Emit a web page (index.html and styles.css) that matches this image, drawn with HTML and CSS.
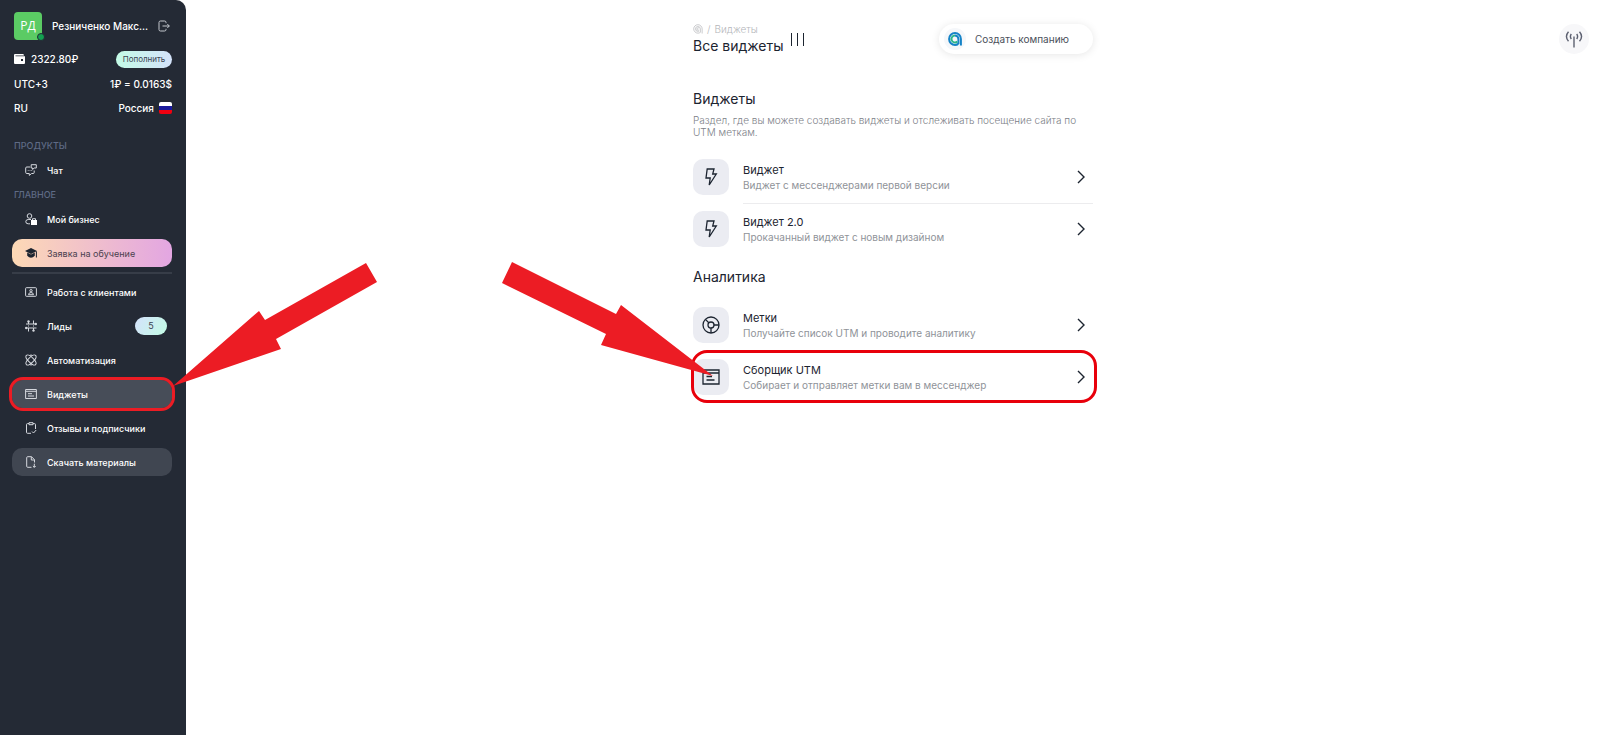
FILE: index.html
```html
<!DOCTYPE html>
<html lang="ru">
<head>
    <meta charset="UTF-8">
    <meta name="viewport" content="width=device-width, initial-scale=1.0">
    <title>Все виджеты</title>
    <link rel="stylesheet" href="styles.css">
</head>
<body>

<aside class="sidebar">
    <div class="user">
        <div class="avatar">РД<span class="status"></span></div>
        <div class="user-name">Резниченко Макс...</div>
        <button class="logout" aria-label="Выйти">
            <svg width="12" height="12" viewBox="0 0 12 12"><path d="M8 3.2V2.4Q8 1 6.500 1H2.500Q1 1 1 2.400V9.600Q1 11 2.500 11H6.500Q8 11 8 9.600V8.800M4.500 6H11.300M9.300 4L11.300 6L9.300 8"/></svg>
        </button>
    </div>

    <div class="info-row info-balance">
        <span class="balance">
            <svg class="wallet" width="11" height="10" viewBox="0 0 11 10"><path d="M0 1Q0 0 1 0H9Q10 0 10 1.500H1.500V2.200H11V9Q11 10 10 10H1Q0 10 0 9Z" fill="#fff"/><rect x="7" y="5" width="2" height="2" fill="#242a35"/></svg>
            2322.80₽
        </span>
        <button class="topup">Пополнить</button>
    </div>
    <div class="info-row"><span>UTC+3</span><span>1₽ = 0.0163$</span></div>
    <div class="info-row">
        <span>RU</span>
        <span class="country">Россия <i class="flag"></i></span>
    </div>

    <div class="menu-title">Продукты</div>
    <nav class="menu">
        <a class="menu-item" href="#">
            <svg class="icon" viewBox="0 0 12 12"><path d="M5.200 3H1.800Q.7 3 .7 4V8.500Q.7 9.500 1.800 9.500H4.300V11.400L6.600 9.500H8.200Q9.200 9.500 9.200 8.500V6.500M3.200 6.300V7M5 6.300V7M6.700 6.300V7M6.200 .7H11.300V4H9.200L7.600 5.500V4H6.200Z"/></svg>
            Чат
        </a>
    </nav>

    <div class="menu-title">Главное</div>
    <nav class="menu">
        <a class="menu-item" href="#">
            <svg class="icon" viewBox="0 0 12 12"><circle cx="4.500" cy="3" r="2.300"/><path d="M6 6.500H3.200Q.8 6.500 .8 8.700Q.8 10.800 3.200 10.800H5"/><path d="M6 7H12V12H6Z" fill="#fff" stroke="none"/><path d="M7.500 7V5.700H10.500V7"/></svg>
            Мой бизнес
        </a>
        <a class="menu-item training" href="#">
            <svg class="icon" viewBox="0 0 12 12"><path d="M6 1L12 4L6 7L0 4Z" fill="#1c2430" stroke="none"/><path d="M2.200 5.600L6 7.600L9.800 5.600V8.800Q8 10.800 6 10.800Q4 10.800 2.200 8.800Z" fill="#1c2430" stroke="none"/><path d="M11.400 4.300V10.500" stroke="#1c2430"/></svg>
            Заявка на обучение
        </a>
    </nav>

    <nav class="menu menu-main">
        <a class="menu-item" href="#">
            <svg class="icon" viewBox="0 0 12 12"><rect x=".6" y="1.700" width="10.800" height="8.600" rx=".8"/><circle cx="6" cy="4.700" r="1.200"/><path d="M3.500 8.700Q3.500 6.600 6 6.600Q8.500 6.600 8.500 8.700Z"/></svg>
            Работа с клиентами
        </a>
        <a class="menu-item" href="#">
            <svg class="icon" viewBox="0 0 12 12"><path d="M3.500 1.500V4M8.500 .5V4M3.500 11.500V8M8.500 10.500V8M1 4H11M1 8H11.500M3.500 5.500V6.500M8.500 5.500V6.500"/><g fill="#d5d8de" stroke="none"><circle cx="3.500" cy="1.400" r="1.200"/><circle cx="10.800" cy="4" r="1.200"/><circle cx="8.500" cy="10.600" r="1.200"/><circle cx="1.200" cy="8" r="1.200"/></g></svg>
            Лиды
            <span class="badge">5</span>
        </a>
        <a class="menu-item" href="#">
            <svg class="icon" viewBox="0 0 12 12"><ellipse cx="6" cy="6" rx="6.500" ry="2.600" transform="rotate(45 6 6)"/><ellipse cx="6" cy="6" rx="6.500" ry="2.600" transform="rotate(-45 6 6)"/><path d="M4.500 1.500Q6 .5 7.500 1.500M4.500 10.500Q6 11.500 7.500 10.500"/></svg>
            Автоматизация
        </a>
        <a class="menu-item active" href="#">
            <svg class="icon" viewBox="0 0 12 12"><path d="M.6 1.500H11.400V10.500H.6ZM.6 3.300H11.400M3 5.700H7M3 8H9"/></svg>
            Виджеты
            <svg class="arrow arrow-menu" width="206" height="126" viewBox="0 0 206 126"><path d="M195 1L206 20L105 77L110 87L2 124L88 49L94 58Z"/></svg>
        </a>
        <a class="menu-item" href="#">
            <svg class="icon" viewBox="0 0 12 12"><path d="M4 1.600H2.500Q1.500 1.600 1.500 2.600V10.300Q1.500 11.300 2.500 11.300H6M8 1.600H9.500Q10.500 1.600 10.500 2.600V7M4 .7H8V2.700H4ZM7 9.500L8.500 11L11.200 8"/></svg>
            Отзывы и подписчики
        </a>
        <a class="menu-item download" href="#">
            <svg class="icon" viewBox="0 0 12 12"><path d="M6.500 11.300H2.700Q1.700 11.300 1.700 10.300V1.700Q1.700 .7 2.700 .7H6.500L9.500 3.700V6.500M6.300 .7V4H9.500M9.300 7.700V11.300M7.900 10L9.300 11.400L10.700 10"/></svg>
            Скачать материалы
        </a>
    </nav>
</aside>

<main class="page">
    <div class="content">
        <header class="header">
            <div>
                <div class="breadcrumbs">
                    <svg width="10" height="10" viewBox="0 0 14 14"><path d="M12.800 13.300V7A5.900 5.900 0 1 0 7 12.800Q8.800 12.800 10.300 11.700V7A3.400 3.400 0 1 0 7 10.300Q8 10.300 8.600 9.800M8.500 6A1.700 1.700 0 1 0 8.500 8"/></svg>
                    <span>/</span>
                    <a href="#">Виджеты</a>
                </div>
                <h1>Все виджеты</h1>
            </div>
            <button class="columns" aria-label="Вид"><i></i><i></i><i></i></button>
            <button class="company">
                <span class="company-logo">
                    <svg width="14" height="14" viewBox="0 0 14 14"><path d="M12.900 13.500V7A5.900 5.900 0 1 0 7 12.900Q9 12.900 10.300 11.900" stroke="#1583c7"/><path d="M10.400 12V7A3.500 3.500 0 0 0 7 3.500" stroke="#1583c7"/><path d="M7 3.500A3.500 3.500 0 1 0 9.300 9.600" stroke="#2bb68a"/></svg>
                </span>
                Создать компанию
            </button>
        </header>

        <section>
            <h2>Виджеты</h2>
            <p class="description">Раздел, где вы можете создавать виджеты и отслеживать посещение сайта по UTM меткам.</p>
            <a class="row" href="#">
                <span class="tile"><svg width="18" height="18" viewBox="0 0 18 18"><path d="M5.200 1H12L10.700 6H14.300L7.200 17L8.200 10H4Z"/></svg></span>
                <span class="row-body">
                    <span class="row-text"><span class="row-title">Виджет</span><span class="row-sub">Виджет с мессенджерами первой версии</span></span>
                    <svg class="chevron" width="8" height="14" viewBox="0 0 8 14"><path d="M1 1L7 7L1 13"/></svg>
                </span>
            </a>
            <a class="row" href="#">
                <span class="tile"><svg width="18" height="18" viewBox="0 0 18 18"><path d="M5.200 1H12L10.700 6H14.300L7.200 17L8.200 10H4Z"/></svg></span>
                <span class="row-body">
                    <span class="row-text"><span class="row-title">Виджет 2.0</span><span class="row-sub">Прокачанный виджет с новым дизайном</span></span>
                    <svg class="chevron" width="8" height="14" viewBox="0 0 8 14"><path d="M1 1L7 7L1 13"/></svg>
                </span>
            </a>
        </section>

        <section class="analytics">
            <h2>Аналитика</h2>
            <a class="row" href="#">
                <span class="tile"><svg width="18" height="18" viewBox="0 0 18 18"><circle cx="9" cy="9" r="8"/><circle cx="9" cy="9" r="3"/><path d="M12 9H17M9 12V17M6.800 6.800L3.400 3.400"/></svg></span>
                <span class="row-body">
                    <span class="row-text"><span class="row-title">Метки</span><span class="row-sub">Получайте список UTM и проводите аналитику</span></span>
                    <svg class="chevron" width="8" height="14" viewBox="0 0 8 14"><path d="M1 1L7 7L1 13"/></svg>
                </span>
            </a>
            <a class="row selected" href="#">
                <span class="tile"><svg width="18" height="18" viewBox="0 0 18 18"><path d="M1 2H17V16H1ZM1 5H17M4.500 8.500H10M4.500 12H12.500"/></svg></span>
                <span class="row-body">
                    <span class="row-text"><span class="row-title">Сборщик UTM</span><span class="row-sub">Собирает и отправляет метки вам в мессенджер</span></span>
                    <svg class="chevron" width="8" height="14" viewBox="0 0 8 14"><path d="M1 1L7 7L1 13"/></svg>
                </span>
                <svg class="arrow arrow-row" width="212" height="116" viewBox="0 0 212 116"><path d="M11 1L115 53L120 44L212 115L100 84L105 73L1 22Z"/></svg>
            </a>
        </section>
    </div>

    <button class="broadcast" aria-label="Эфир">
        <svg width="18" height="18" viewBox="0 0 18 18"><path d="M9 6.500V17.500"/><path d="M6.300 4Q4.500 6.500 6.300 9M11.700 4Q13.500 6.500 11.700 9M3.500 1.800Q-.6 6.500 3.500 11.200M14.500 1.800Q18.600 6.500 14.500 11.200"/></svg>
    </button>
</main>

</body>
</html>
```

FILE: styles.css
```css
* {
    box-sizing: border-box;
}

body {
    margin: 0;
    min-height: 100vh;
    display: flex;
    font-family: Inter, "Liberation Sans", sans-serif;
    background: #ffffff;
    color: #1c2430;
}

a {
    color: inherit;
    text-decoration: none;
}

button {
    padding: 0;
    border: none;
    background: none;
    font-family: inherit;
    color: inherit;
    cursor: pointer;
}

svg {
    flex: none;
    fill: none;
    stroke: currentColor;
}

h1, h2 {
    margin: 0;
    font-size: 14px;
    line-height: 18px;
    font-weight: 400;
}

/* Sidebar */
.sidebar {
    flex: none;
    width: 186px;
    padding: 12px 14px 12px 12px;
    border-radius: 0 10px 0 0;
    background: #242a35;
    color: #ffffff;
}

.user {
    display: flex;
    align-items: center;
    padding-left: 2px;
    margin-bottom: 7px;
}

.avatar {
    position: relative;
    width: 28px;
    height: 28px;
    line-height: 28px;
    border-radius: 4px;
    background: #5bcb64;
    font-family: "Open Sans", sans-serif;
    font-size: 12px;
    text-align: center;
}

.status {
    position: absolute;
    right: -3px;
    bottom: -1px;
    width: 8px;
    height: 8px;
    border: 1px solid #242a35;
    border-radius: 50%;
    background: #12a150;
}

.user-name {
    flex: 1;
    padding-left: 10px;
    font-size: 10px;
    font-weight: 500;
    white-space: nowrap;
}

.logout {
    display: flex;
    margin-right: 2px;
    color: #c4c8cf;
}

.info-row {
    display: flex;
    justify-content: space-between;
    align-items: center;
    height: 24px;
    padding-left: 2px;
    font-size: 10px;
    font-weight: 500;
}

.info-balance {
    margin-bottom: 1px;
}

.balance, .country {
    display: flex;
    align-items: center;
    gap: 6px;
}

.country {
    gap: 5px;
}

.wallet {
    stroke: none;
}

.topup {
    width: 56px;
    height: 17px;
    border-radius: 9px;
    background: linear-gradient(90deg, #c4fbe6, #d4e3fb);
    color: #3b4452;
    font-size: 8px;
}

.flag {
    width: 13px;
    height: 12px;
    border-radius: 2px;
    background: linear-gradient(#ffffff 33%, #1a1a9c 33%, #1a1a9c 66%, #f00010 66%);
}

.menu-title {
    margin: 19px 0 3px 2px;
    font-size: 9px;
    line-height: 14px;
    font-weight: 500;
    text-transform: uppercase;
    color: #5f6b85;
}

.menu + .menu-title {
    margin-top: 4px;
}

.menu {
    display: flex;
    flex-direction: column;
    gap: 6px;
}

.menu-main {
    margin-top: 5px;
    padding-top: 4px;
    border-top: 2px solid #373d48;
}

.menu-item {
    position: relative;
    display: flex;
    align-items: center;
    gap: 10px;
    height: 28px;
    padding: 0 5px 0 13px;
    border-radius: 10px;
    font-size: 9px;
    font-weight: 500;
}

.icon {
    width: 12px;
    height: 12px;
    stroke: #d5d8de;
}

.training {
    background: linear-gradient(90deg, #fdd9b5, #e3a6e2);
    color: #4a3f4e;
    font-weight: 400;
}

.badge {
    width: 32px;
    margin-left: auto;
    border-radius: 9px;
    background: linear-gradient(120deg, #d5e2fc, #c2fce5);
    color: #3b4452;
    font-weight: 400;
    line-height: 18px;
    text-align: center;
}

.active {
    background: #474d58;
}

.download {
    background: #404651;
}

/* Red marks over the active item and the chosen row */
.active::after,
.selected::after {
    content: "";
    position: absolute;
    inset: -3px;
    border: 3px solid #ec1c24;
    border-radius: 14px;
}

.arrow {
    position: absolute;
    z-index: 2;
    fill: #ec1c24;
    stroke: none;
    pointer-events: none;
}

.arrow-menu {
    left: 159px;
    bottom: 20px;
}

.arrow-row {
    right: 380px;
    bottom: 26px;
}

/* Page */
.page {
    position: relative;
    flex: 1;
    padding: 23px 12px 24px;
}

.content {
    max-width: 400px;
    margin: 0 auto;
}

.header {
    display: flex;
    margin-bottom: 35px;
}

.breadcrumbs {
    display: flex;
    align-items: center;
    gap: 4px;
    height: 12px;
    margin-bottom: 2px;
    color: #b4b6ba;
    font-size: 10px;
    font-weight: 300;
}

.columns {
    display: flex;
    gap: 5px;
    height: 13px;
    margin: 10px 0 0 8px;
}

.columns i {
    width: 1px;
    height: 13px;
    background: #1c2430;
}

.company {
    display: flex;
    align-items: center;
    gap: 9px;
    width: 154px;
    height: 30px;
    margin: 1px 0 0 auto;
    padding-left: 5px;
    border-radius: 15px;
    box-shadow: 0 1px 8px rgba(0, 0, 0, 0.1);
    color: #4a4f5a;
    font-size: 10px;
}

.company-logo {
    display: flex;
    align-items: center;
    justify-content: center;
    width: 22px;
    height: 22px;
    border-radius: 50%;
    background: #f5f7fa;
    stroke-width: 2;
}

.description {
    margin: 6px 0 13px;
    color: #7c8087;
    font-size: 10px;
    line-height: 12px;
    font-weight: 300;
}

.row {
    position: relative;
    display: flex;
    align-items: center;
    gap: 14px;
    height: 52px;
}

.tile {
    display: flex;
    flex: none;
    align-items: center;
    justify-content: center;
    width: 36px;
    height: 36px;
    border-radius: 10px;
    background: #ebecf2;
    stroke-width: 1.3;
}

.row-body {
    display: flex;
    flex: 1;
    align-items: center;
    align-self: stretch;
    padding-right: 8px;
}

section:not(.analytics) .row:not(:last-child) .row-body {
    box-shadow: 0 1px 0 #ececee;
}

.row-text {
    flex: 1;
    padding-top: 1px;
}

.row-title, .row-sub {
    display: block;
    font-size: 11px;
    line-height: 15px;
}

.row-sub {
    color: #8f9399;
    font-size: 10px;
}

.chevron {
    stroke-width: 1.4;
}

.analytics {
    margin-top: 13px;
}

.analytics h2 {
    margin-bottom: 13px;
}

.selected::after {
    inset: -1px -4px 0 -2px;
    border-color: #e8000b;
    border-radius: 16px;
}

.broadcast {
    position: absolute;
    top: 24px;
    right: 11px;
    display: flex;
    align-items: center;
    justify-content: center;
    width: 30px;
    height: 30px;
    border-radius: 50%;
    background: #f7f7f9;
    color: #5c6070;
    stroke-width: 1.4;
}
```
